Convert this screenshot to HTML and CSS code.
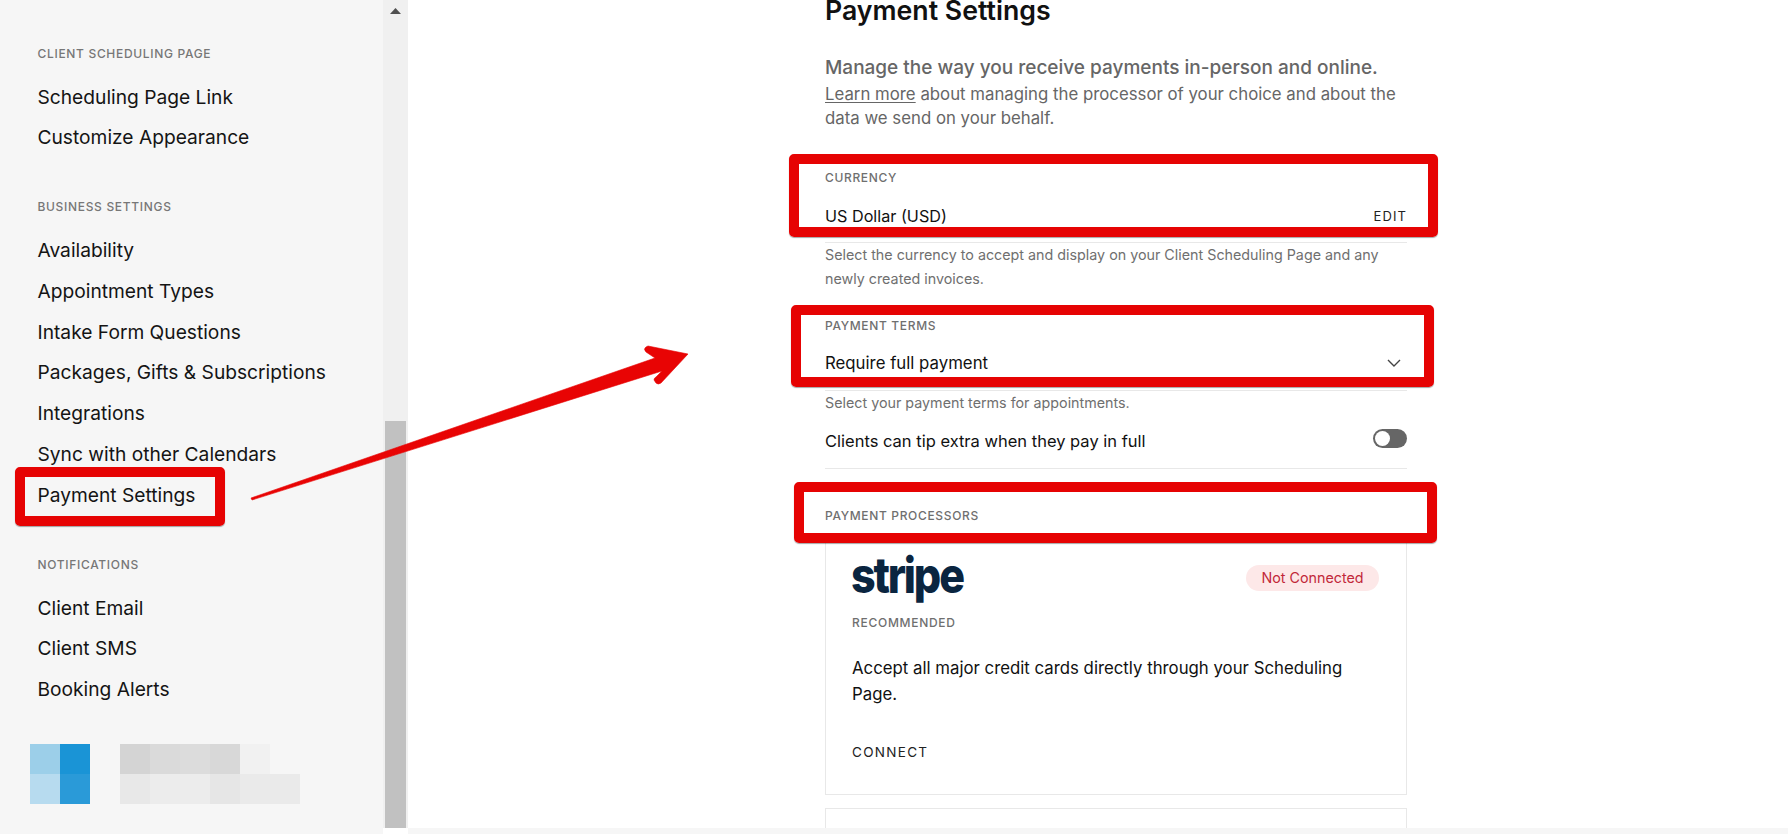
FILE: index.html
```html
<!DOCTYPE html>
<html lang="en">
<head>
<meta charset="utf-8">
<title>Payment Settings</title>
<link rel="stylesheet" href="styles.css">
</head>
<body>
<div class="app">
  <nav class="sidebar">
    <section class="nav-group nav-group-first">
      <div class="nav-label">CLIENT SCHEDULING PAGE</div>
      <a class="nav-item">Scheduling Page Link</a>
      <a class="nav-item">Customize Appearance</a>
    </section>
    <section class="nav-group nav-group-business">
      <div class="nav-label">BUSINESS SETTINGS</div>
      <a class="nav-item">Availability</a>
      <a class="nav-item">Appointment Types</a>
      <a class="nav-item">Intake Form Questions</a>
      <a class="nav-item">Packages, Gifts &amp; Subscriptions</a>
      <a class="nav-item">Integrations</a>
      <a class="nav-item">Sync with other Calendars</a>
      <a class="nav-item">Payment Settings</a>
    </section>
    <section class="nav-group nav-group-last">
      <div class="nav-label">NOTIFICATIONS</div>
      <a class="nav-item">Client Email</a>
      <a class="nav-item">Client SMS</a>
      <a class="nav-item">Booking Alerts</a>
    </section>
    <div class="account">
      <div class="mosaic avatar">
        <i class="c-b1"></i><i class="c-b2"></i>
        <i class="c-b3"></i><i class="c-b4"></i>
      </div>
      <div class="mosaic name">
        <i class="c-g1"></i><i class="c-g2"></i><i class="c-g3"></i><i class="c-g4"></i><i class="c-g5"></i><i></i>
        <i class="c-g6"></i><i class="c-g7"></i><i class="c-g7"></i><i class="c-g8"></i><i class="c-g9"></i><i class="c-g9"></i>
      </div>
    </div>
  </nav>
  <div class="scrollbar">
    <svg class="scroll-up" width="11" height="6" viewBox="0 0 11 6"><path d="M5.5 0 11 6H0z" fill="#505050"/></svg>
    <div class="scroll-thumb"></div>
  </div>
  <div class="main-wrap">
    <main class="main">
      <div class="content">
        <h1 class="title">Payment Settings</h1>
        <p class="lead">Manage the way you receive payments in-person and online.</p>
        <p class="intro"><u>Learn more</u> about managing the processor of your choice and about the data we send on your behalf.</p>

        <div class="label currency-label">CURRENCY</div>
        <div class="row value-row currency-row"><span>US Dollar (USD)</span><span class="action">EDIT</span></div>
        <p class="help">Select the currency to accept and display on your Client Scheduling Page and any newly created invoices.</p>

        <div class="label terms-label">PAYMENT TERMS</div>
        <div class="row value-row terms-row"><span>Require full payment</span>
          <svg class="chevron" width="14" height="8" viewBox="0 0 14 8"><path d="M1 1l6 6 6-6" fill="none" stroke="#444" stroke-width="1.4"/></svg>
        </div>
        <p class="help">Select your payment terms for appointments.</p>
        <div class="row tip-row"><span>Clients can tip extra when they pay in full</span><span class="toggle"><span class="knob"></span></span></div>

        <div class="label processors-label">PAYMENT PROCESSORS</div>
        <article class="card">
          <div class="card-head">
            <span class="stripe">stripe</span>
            <span class="badge">Not Connected</span>
          </div>
          <div class="label recommended">RECOMMENDED</div>
          <p class="card-text">Accept all major credit cards directly through your Scheduling Page.</p>
          <div class="action connect">CONNECT</div>
        </article>
        <article class="card card-next"></article>
      </div>
    </main>
    <div class="strip"></div>
  </div>
</div>

<div class="mark mark-nav"></div>
<div class="mark mark-currency"></div>
<div class="mark mark-terms"></div>
<div class="mark mark-processors"></div>
<svg class="arrow" width="1788" height="834" viewBox="0 0 1788 834">
  <path d="M251 498 655 358 646 352Q643 349 646 347L648 346 688 354 661 383Q658 385 656 383L654 380Q654 378 656 377L662 371 252 500Z" fill="#e80404" stroke="#e80404" stroke-width=".6" stroke-linejoin="round"/>
</svg>
</body>
</html>
```
FILE: styles.css
```css
* { box-sizing: border-box; }
html, body { margin: 0; height: 100%; overflow: hidden; }
body { background: #fff; font-family: Inter, "Liberation Sans", sans-serif; color: #111; position: relative; width: 1788px; height: 834px; }
p, h1 { margin: 0; }

.app { display: flex; height: 834px; }

.sidebar { width: 383px; flex: none; background: #f6f6f6; padding: 46px 0 0 37.5px; }
.nav-group-first { margin-bottom: 42px; }
.nav-group-business { margin-bottom: 41px; }
.nav-group-last { margin-bottom: 34.4px; }
.nav-label { font-size: 12px; line-height: 16px; letter-spacing: .68px; font-weight: 500; color: #777; margin-bottom: 15px; }
.nav-item { display: block; font-size: 19.2px; font-weight: 420; line-height: 40.8px; height: 40.8px; color: #141414; white-space: nowrap; }
.nav-group-first .nav-item { height: 40px; line-height: 40px; }

.account { display: flex; gap: 30px; margin-left: -7.5px; }
.mosaic { display: grid; grid-auto-rows: 30px; grid-auto-columns: 30px; }
.mosaic i { display: block; }
.avatar { grid-template-columns: repeat(2, 30px); }
.name { grid-template-columns: repeat(6, 30px); }
.c-b1 { background: #9ccfe9; } .c-b2 { background: #1a94d6; }
.c-b3 { background: #b7dbef; } .c-b4 { background: #2a9ad8; }
.c-g1 { background: #d4d4d4; } .c-g2 { background: #dadada; } .c-g3 { background: #dcdcdc; }
.c-g4 { background: #d8d8d8; } .c-g5 { background: #f1f1f1; }
.c-g6 { background: #e8e8e8; } .c-g7 { background: #ececec; } .c-g8 { background: #e6e6e6; } .c-g9 { background: #eaeaea; }

.scrollbar { width: 25px; flex: none; height: 828px; background: #f0f0f0; padding: 8px 2px 0; display: flex; flex-direction: column; align-items: center; }
.scroll-up { flex: none; }
.scroll-thumb { width: 21px; height: 407px; margin-top: auto; background: #c1c1c1; }

.main-wrap { flex: 1; display: flex; flex-direction: column; min-width: 0; }
.main { height: 828px; overflow: hidden; }
.strip { height: 6px; background: #f6f6f6; }
.content { width: 582px; margin: -6px 0 0 417px; }

.title { font-size: 26.7px; line-height: 32px; font-weight: 600; color: #111; margin-bottom: 30px; }
.lead { font-size: 19px; line-height: 24px; font-weight: 500; color: #666; margin-bottom: 2px; }
.intro { font-size: 16.8px; line-height: 24px; color: #666; }
.intro u { text-underline-offset: 2px; }

.label { font-size: 12px; line-height: 16px; letter-spacing: .66px; font-weight: 500; color: #6f6f6f; }
.currency-label { margin-top: 40px; }
.terms-label { margin-top: 27px; }
.processors-label { margin-top: 39px; }

.row { display: flex; justify-content: space-between; align-items: center; font-size: 16.5px; line-height: 24px; color: #111; border-bottom: 1px solid #e8e8e8; }
.currency-row { margin-top: 18px; padding-bottom: 14px; font-size: 16.2px; }
.terms-row { margin-top: 17px; padding-bottom: 15px; font-size: 16.8px; }
.tip-row { margin-top: 14px; padding-bottom: 15px; }
.chevron { margin-right: 6px; }
.action { font-size: 13px; line-height: 16px; letter-spacing: 1.1px; color: #222; }
.help { font-size: 14.3px; line-height: 24px; color: #6f6f6f; }

.toggle { width: 34px; height: 19px; border-radius: 10px; background: #666; padding: 2px; display: block; margin-bottom: 5px; }
.knob { display: block; width: 15px; height: 15px; border-radius: 50%; background: #fff; }

.card { border: 1px solid #e8e8e8; margin-top: 14px; height: 257px; padding: 0 26px; }
.card-head { display: flex; justify-content: space-between; align-items: center; margin-top: 13px; height: 52px; }
.stripe { font-size: 50px; line-height: 50px; font-weight: 800; letter-spacing: -2.5px; color: #0a2540; transform: scaleX(.86); transform-origin: left center; margin: 0 0 6px -1px; }
.badge { width: 133px; height: 26px; border-radius: 13px; background: #fde8e8; color: #c2283a; font-size: 14.3px; line-height: 26px; text-align: center; margin-right: 1px; }
.recommended { margin-top: 11px; letter-spacing: .72px; }
.card-text { font-size: 16.8px; line-height: 26px; color: #111; margin-top: 24px; }
.connect { margin-top: 37px; letter-spacing: 1.3px; font-size: 13.5px; }
.card-next { height: 60px; margin-top: 13px; }

.mark { position: absolute; border: 10px solid #e60303; border-radius: 5px; box-shadow: 0 1px 1px rgba(0,0,0,.35); }
.mark-nav { left: 15px; top: 467px; width: 210px; height: 59px; }
.mark-currency { left: 789px; top: 154px; width: 649px; height: 83px; }
.mark-terms { left: 791px; top: 305px; width: 643px; height: 82px; }
.mark-processors { left: 794px; top: 482px; width: 643px; height: 61px; }
.arrow { position: absolute; left: 0; top: 0; pointer-events: none; }
```
